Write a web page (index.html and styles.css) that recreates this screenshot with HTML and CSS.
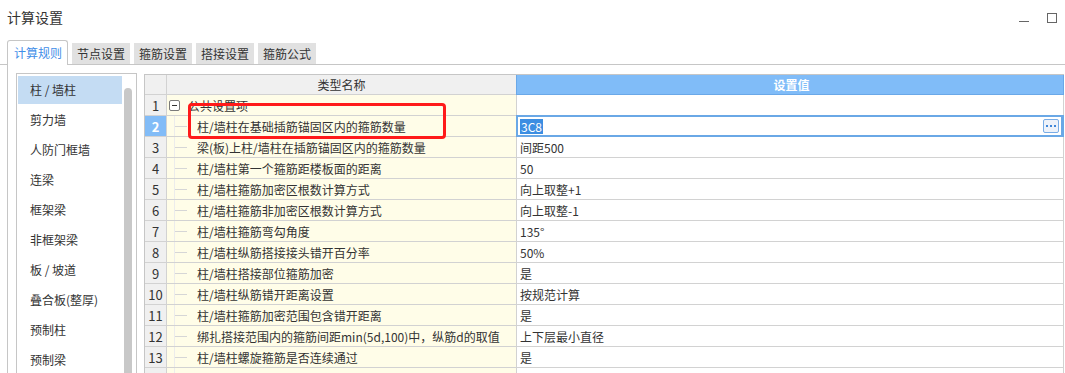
FILE: index.html
```html
<!DOCTYPE html>
<html lang="zh">
<head>
<meta charset="utf-8">
<title>计算设置</title>
<link rel="stylesheet" href="styles.css">
</head>
<body>
<div class="window">
  <div class="titlebar">
    <span class="title">计算设置</span>
    <div class="controls">
      <span class="ctl-min"></span>
      <span class="ctl-max"></span>
    </div>
  </div>
  <div class="tabs">
    <div class="tab active">计算规则</div>
    <div class="tab">节点设置</div>
    <div class="tab">箍筋设置</div>
    <div class="tab">搭接设置</div>
    <div class="tab">箍筋公式</div>
  </div>
  <div class="content">
    <div class="sidebar">
      <ul class="list">
        <li class="item selected">柱 / 墙柱</li>
        <li class="item">剪力墙</li>
        <li class="item">人防门框墙</li>
        <li class="item">连梁</li>
        <li class="item">框架梁</li>
        <li class="item">非框架梁</li>
        <li class="item">板 / 坡道</li>
        <li class="item">叠合板(整厚)</li>
        <li class="item">预制柱</li>
        <li class="item">预制梁</li>
      </ul>
      <div class="scroll"><div class="thumb"></div></div>
    </div>
    <div class="grid">
      <div class="row head">
        <div class="c-num"></div>
        <div class="c-name center">类型名称</div>
        <div class="c-val hval">设置值</div>
      </div>
      <div class="row">
        <div class="c-num">1</div>
        <div class="c-name"><span class="toggle"></span><span class="grp">公共设置项</span></div>
        <div class="c-val"></div>
      </div>
      <div class="row">
        <div class="c-num sel">2</div>
        <div class="c-name"><span class="branch"></span>柱/墙柱在基础插筋锚固区内的箍筋数量</div>
        <div class="c-val editing"><span class="hl">3C8</span><span class="more"><i></i><i></i><i></i></span></div>
      </div>
      <div class="row">
        <div class="c-num">3</div>
        <div class="c-name"><span class="branch"></span>梁(板)上柱/墙柱在插筋锚固区内的箍筋数量</div>
        <div class="c-val">间距500</div>
      </div>
      <div class="row">
        <div class="c-num">4</div>
        <div class="c-name"><span class="branch"></span>柱/墙柱第一个箍筋距楼板面的距离</div>
        <div class="c-val">50</div>
      </div>
      <div class="row">
        <div class="c-num">5</div>
        <div class="c-name"><span class="branch"></span>柱/墙柱箍筋加密区根数计算方式</div>
        <div class="c-val">向上取整+1</div>
      </div>
      <div class="row">
        <div class="c-num">6</div>
        <div class="c-name"><span class="branch"></span>柱/墙柱箍筋非加密区根数计算方式</div>
        <div class="c-val">向上取整-1</div>
      </div>
      <div class="row">
        <div class="c-num">7</div>
        <div class="c-name"><span class="branch"></span>柱/墙柱箍筋弯勾角度</div>
        <div class="c-val">135°</div>
      </div>
      <div class="row">
        <div class="c-num">8</div>
        <div class="c-name"><span class="branch"></span>柱/墙柱纵筋搭接接头错开百分率</div>
        <div class="c-val">50%</div>
      </div>
      <div class="row">
        <div class="c-num">9</div>
        <div class="c-name"><span class="branch"></span>柱/墙柱搭接部位箍筋加密</div>
        <div class="c-val">是</div>
      </div>
      <div class="row">
        <div class="c-num">10</div>
        <div class="c-name"><span class="branch"></span>柱/墙柱纵筋错开距离设置</div>
        <div class="c-val">按规范计算</div>
      </div>
      <div class="row">
        <div class="c-num">11</div>
        <div class="c-name"><span class="branch"></span>柱/墙柱箍筋加密范围包含错开距离</div>
        <div class="c-val">是</div>
      </div>
      <div class="row">
        <div class="c-num">12</div>
        <div class="c-name"><span class="branch"></span>绑扎搭接范围内的箍筋间距min(5d,100)中，纵筋d的取值</div>
        <div class="c-val">上下层最小直径</div>
      </div>
      <div class="row">
        <div class="c-num">13</div>
        <div class="c-name"><span class="branch"></span>柱/墙柱螺旋箍筋是否连续通过</div>
        <div class="c-val">是</div>
      </div>
      <div class="row">
        <div class="c-num"></div>
        <div class="c-name"><span class="branch"></span></div>
        <div class="c-val"></div>
      </div>
      <div class="mark"></div>
    </div>
  </div>
</div>
</body>
</html>
```

FILE: styles.css
```css
* { box-sizing: border-box; margin: 0; padding: 0; }
html, body { width: 1065px; height: 373px; overflow: hidden; background: #fff; }
body {
  font-family: "Noto Sans CJK SC", "Microsoft YaHei", "Noto Sans", sans-serif;
  font-size: 12px;
  color: #333;
}
.window { display: flex; flex-direction: column; height: 373px; overflow: hidden; }

.titlebar {
  height: 40px;
  flex: none;
  display: flex;
  align-items: flex-start;
  justify-content: space-between;
  padding: 7px 8px 0 7px;
}
.title { font-size: 14px; line-height: 20px; color: #333; }
.controls { display: flex; align-items: flex-start; gap: 18px; padding-top: 6px; }
.ctl-min { width: 10px; height: 1px; background: #666; margin-top: 8px; }
.ctl-max { width: 10px; height: 10px; border: 1px solid #666; }

.tabs {
  height: 25px;
  flex: none;
  display: flex;
  align-items: flex-end;
  gap: 4px;
  padding-left: 7px;
  border-bottom: 1px solid #c6c6c6;
}
.tab {
  height: 21px;
  line-height: 21px;
  padding: 0 5px;
  background: #e1e1e1;
  color: #333;
  white-space: nowrap;
}
.tab.active {
  height: 25px;
  line-height: 23px;
  padding: 0 6px;
  background: #fff;
  color: #3f8ee8;
  border: 1px solid #c6c6c6;
  border-bottom: none;
  border-radius: 3px 3px 0 0;
  margin-bottom: -1px;
  width: 61px;
}

.content {
  flex: 1;
  display: flex;
  align-items: flex-start;
  gap: 7px;
  margin-left: 7px;
  border-left: 1px solid #c6c6c6;
  padding: 8px 0 0 8px;
  min-height: 0;
  overflow: hidden;
}

.sidebar {
  width: 121px;
  height: 310px;
  border: 1px solid #c6c6c6;
  display: flex;
  padding: 2px 0 0 1px;
  flex: none;
}
.list { list-style: none; width: 104px; display: flex; flex-direction: column; gap: 2px; }
.item {
  height: 28px;
  line-height: 28px;
  padding-left: 12px;
  white-space: nowrap;
  color: #333;
  flex: none;
}
.item.selected { background: #c4dcf3; }
.scroll { width: 14px; padding: 12px 0 0 2px; }
.thumb { width: 8px; height: 300px; background: #c8c8c8; border-radius: 4px 4px 0 0; }

.grid {
  position: relative;
  width: 920px;
  margin-top: 1px;
  border-top: 1px solid #c6c6c6;
  border-left: 1px solid #c6c6c6;
  flex: none;
}
.row { display: flex; height: 21px; }
.row.head { height: 20px; }
.row > div {
  border-right: 1px solid #d2d2d2;
  border-bottom: 1px solid #d2d2d2;
  white-space: nowrap;
  overflow: hidden;
  display: flex;
  align-items: center;
}
.c-num {
  width: 22px;
  flex: none;
  background: #f0f0f0;
  justify-content: center;
  font-size: 13px;
  color: #333;
}
.c-num.sel { background: #82bcf7; color: #fff; font-weight: bold; }
.c-name {
  width: 350px;
  flex: none;
  background: #fffde8;
  padding-left: 2px;
}
.c-name.center { justify-content: center; background: #f0f0f0; padding-left: 0; }
.c-val { flex: 1; padding-left: 3px; position: relative; }
.c-val.hval {
  justify-content: center;
  background: #80bcf8;
  color: #fff;
  font-weight: bold;
  border-bottom-color: #6aa8e8;
  border-left: 1px solid #6aa8e8;
  margin-left: -1px;
  border-right-color: #6aa8e8;
}
.toggle {
  position: relative;
  width: 11px;
  height: 11px;
  border: 1px solid #7a7a7a;
  border-radius: 2px;
  margin-right: 8px;
  background: #fff;
  flex: none;
}
.toggle::after {
  content: "";
  position: absolute;
  left: 2px;
  top: 4px;
  width: 5px;
  height: 1px;
  background: #333;
}
.branch {
  align-self: stretch;
  width: 13px;
  margin-left: 5px;
  margin-right: 10px;
  flex: none;
  border-left: 1px solid #ececec;
  background: linear-gradient(#d6d6d6, #d6d6d6) no-repeat left center / 100% 1px;
}
.c-val.editing {
  box-shadow: inset 0 0 0 2px #6aa8e6;
  margin-left: -1px;
  padding-left: 4px;
  margin-top: -1px;
  height: 22px;
  border-bottom: none;
  border-right-color: #6aa8e6;
}
.hl { background: #3c8ee2; color: #fff; padding: 0 1px; line-height: 15px; }
.more {
  margin-left: auto;
  margin-right: 4px;
  width: 16px;
  height: 14px;
  border: 1px solid #78ace6;
  border-radius: 2px;
  background: #edf2fa;
  display: flex;
  align-items: center;
  justify-content: center;
  gap: 2px;
}
.more i { width: 2px; height: 2px; background: #3f86d8; display: block; }

.mark {
  position: absolute;
  left: 43px;
  top: 28px;
  width: 258px;
  height: 36px;
  border: 3px solid #ff1a1a;
  border-radius: 4px;
  pointer-events: none;
}
```
